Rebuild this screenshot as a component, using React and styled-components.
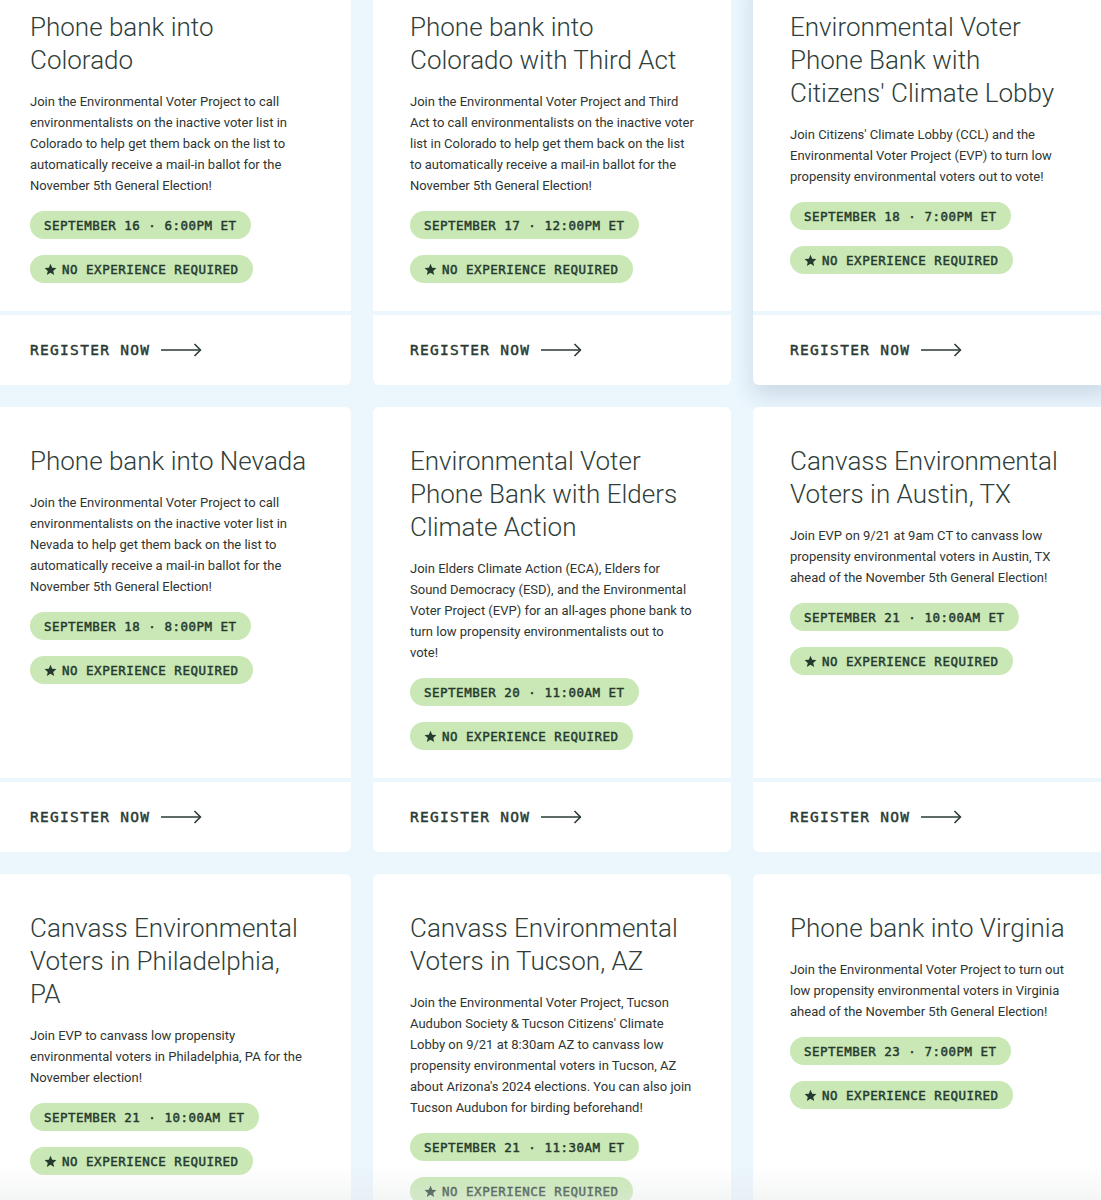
import styled, { createGlobalStyle } from 'styled-components';

const GlobalStyle = createGlobalStyle`
  html, body {
    margin: 0;
    padding: 0;
    background: #ebf6fd;
  }
  * {
    box-sizing: border-box;
  }
`

const Page = styled.div`
  height: 100vh;
  overflow: hidden;
  background: #ebf6fd;
`

const Grid = styled.div`
  display: grid;
  grid-template-columns: repeat(3, 358px);
  gap: 22px;
  width: 1118px;
  margin: -27px 0 0 -7px;
`

const Card = styled.article`
  display: flex;
  flex-direction: column;
  background: #fff;
  border-radius: 6px;
  box-shadow: ${(props) => (props.raised ? '0 10px 22px rgba(30, 70, 110, 0.16)' : 'none')};
`

const Body = styled.div`
  flex: 1;
  padding: 38px 37px 28px;
`

const Title = styled.h3`
  margin: 0 0 14px;
  font-family: Roboto, 'Liberation Sans', sans-serif;
  font-weight: 300;
  font-size: 26px;
  line-height: 33px;
  color: #2f3e3a;
`

const Description = styled.p`
  margin: 0;
  font-family: Roboto, 'Liberation Sans', sans-serif;
  font-size: 13px;
  line-height: 21px;
  color: #2f3532;
`

const Tags = styled.div`
  display: flex;
  flex-direction: column;
  align-items: flex-start;
  gap: 16px;
  margin-top: 15px;
`

/* mono labels sit between regular and bold, so thicken the regular cut a little */
const Tag = styled.span`
  display: inline-flex;
  align-items: center;
  gap: 5px;
  height: 28px;
  padding: 0 14px;
  border-radius: 14px;
  background: #c9e8b5;
  color: #25392f;
  font-family: 'DejaVu Sans Mono', 'Liberation Mono', monospace;
  font-size: 12.5px;
  letter-spacing: 0.5px;
  -webkit-text-stroke: 0.45px #25392f;
  white-space: nowrap;
`

const Footer = styled.div`
  display: flex;
  align-items: center;
  height: 74px;
  padding: 0 37px;
  border-top: 4px solid #ebf6fd;
`

const RegisterLink = styled.a`
  display: inline-flex;
  align-items: center;
  gap: 11px;
  font-family: 'DejaVu Sans Mono', 'Liberation Mono', monospace;
  font-size: 14.5px;
  letter-spacing: 1.3px;
  -webkit-text-stroke: 0.45px #2a3a34;
  color: #2a3a34;
  text-decoration: none;
`

const BottomFade = styled.div`
  position: fixed;
  left: 0;
  right: 0;
  bottom: 0;
  height: 34px;
  pointer-events: none;
  background: linear-gradient(to bottom, rgba(236, 238, 238, 0), rgba(228, 231, 231, 0.4));
`

const Star = () => (
  <svg width="13" height="13" viewBox="0 0 24 24" fill="#25392f">
    <path d="M12 1.5l3.1 7.2 7.8.7-5.9 5.2 1.8 7.7L12 18.2l-6.8 4.1 1.8-7.7L1.1 9.4l7.8-.7z" />
  </svg>
)

const Arrow = () => (
  <svg width="41" height="14" viewBox="0 0 41 14" fill="none" stroke="#2a3a34" strokeWidth="1.6">
    <path d="M0 7h39.5" />
    <path d="M33.5 1l6 6-6 6" strokeLinejoin="round" />
  </svg>
)

const events = [
  {
    title: 'Phone bank into Colorado',
    text: 'Join the Environmental Voter Project to call environmentalists on the inactive voter list in Colorado to help get them back on the list to automatically receive a mail-in ballot for the November 5th General Election!',
    when: 'SEPTEMBER 16 · 6:00PM ET',
  },
  {
    title: 'Phone bank into Colorado with Third Act',
    text: 'Join the Environmental Voter Project and Third Act to call environmentalists on the inactive voter list in Colorado to help get them back on the list to automatically receive a mail-in ballot for the November 5th General Election!',
    when: 'SEPTEMBER 17 · 12:00PM ET',
  },
  {
    title: "Environmental Voter Phone Bank with Citizens' Climate Lobby",
    text: "Join Citizens' Climate Lobby (CCL) and the Environmental Voter Project (EVP) to turn low propensity environmental voters out to vote!",
    when: 'SEPTEMBER 18 · 7:00PM ET',
    raised: true,
  },
  {
    title: 'Phone bank into Nevada',
    text: 'Join the Environmental Voter Project to call environmentalists on the inactive voter list in Nevada to help get them back on the list to automatically receive a mail-in ballot for the November 5th General Election!',
    when: 'SEPTEMBER 18 · 8:00PM ET',
  },
  {
    title: 'Environmental Voter Phone Bank with Elders Climate Action',
    text: 'Join Elders Climate Action (ECA), Elders for Sound Democracy (ESD), and the Environmental Voter Project (EVP) for an all-ages phone bank to turn low propensity environmentalists out to vote!',
    when: 'SEPTEMBER 20 · 11:00AM ET',
  },
  {
    title: 'Canvass Environmental Voters in Austin, TX',
    text: 'Join EVP on 9/21 at 9am CT to canvass low propensity environmental voters in Austin, TX ahead of the November 5th General Election!',
    when: 'SEPTEMBER 21 · 10:00AM ET',
  },
  {
    title: 'Canvass Environmental Voters in Philadelphia, PA',
    text: 'Join EVP to canvass low propensity environmental voters in Philadelphia, PA for the November election!',
    when: 'SEPTEMBER 21 · 10:00AM ET',
  },
  {
    title: 'Canvass Environmental Voters in Tucson, AZ',
    text: "Join the Environmental Voter Project, Tucson Audubon Society & Tucson Citizens' Climate Lobby on 9/21 at 8:30am AZ to canvass low propensity environmental voters in Tucson, AZ about Arizona's 2024 elections. You can also join Tucson Audubon for birding beforehand!",
    when: 'SEPTEMBER 21 · 11:30AM ET',
  },
  {
    title: 'Phone bank into Virginia',
    text: 'Join the Environmental Voter Project to turn out low propensity environmental voters in Virginia ahead of the November 5th General Election!',
    when: 'SEPTEMBER 23 · 7:00PM ET',
  },
]

function EventCard({ event }) {
  return (
    <Card raised={event.raised}>
      <Body>
        <Title>{event.title}</Title>
        <Description>{event.text}</Description>
        <Tags>
          <Tag>{event.when}</Tag>
          <Tag>
            <Star />
            NO EXPERIENCE REQUIRED
          </Tag>
        </Tags>
      </Body>
      <Footer>
        <RegisterLink href="#">
          REGISTER NOW
          <Arrow />
        </RegisterLink>
      </Footer>
    </Card>
  )
}

function App() {
  return (
    <Page>
      <GlobalStyle />
      <Grid>
        {events.map((event) => (
          <EventCard key={event.title} event={event} />
        ))}
      </Grid>
      <BottomFade />
    </Page>
  )
}

export default App
